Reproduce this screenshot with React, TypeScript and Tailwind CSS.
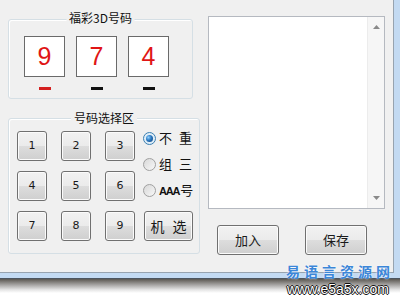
import React from 'react';

const btn =
  'border border-[#707070] rounded-[3px] bg-[linear-gradient(to_bottom,#f2f2f2_0%,#ebebeb_50%,#dddddd_50%,#cfcfcf_100%)] shadow-[inset_0_0_0_1px_#fbfbfb] flex items-center justify-center text-[#1a1a1a]';

const GroupBox: React.FC<{ title: string; className: string; titleTop: string; children: React.ReactNode }> = ({
  title,
  className,
  titleTop,
  children,
}) => (
  <div className={`relative border border-[#d5dfe5] rounded-[3px] shadow-[inset_1px_1px_0_#ffffff] ${className}`}>
    <div
      className={`absolute left-1/2 -translate-x-1/2 ${titleTop} bg-[#f0f0f0] px-[3px] text-[12px] leading-[16px] text-[#111] whitespace-nowrap`}
    >
      {title}
    </div>
    {children}
  </div>
);

const DigitBox: React.FC<{ value: string; dash: string }> = ({ value, dash }) => (
  <div className="flex flex-col items-center">
    <div className="w-[41px] h-[41px] border border-[#6a6a6a] bg-white flex items-center justify-center font-['Liberation_Sans',sans-serif] text-[25px] leading-none text-[#e01515]">
      {value}
    </div>
    <div className={`mt-[10px] w-[12px] h-[3px] ${dash}`} />
  </div>
);

const Radio: React.FC<{ checked?: boolean; children: React.ReactNode }> = ({ checked, children }) => (
  <div className="flex items-center h-[16px]">
    <div
      className={`w-[13px] h-[13px] rounded-full border flex items-center justify-center ${
        checked ? 'border-[#3c7fb1] bg-[#dfeef8]' : 'border-[#a0a0a0] bg-[linear-gradient(135deg,#d8d8d8,#f8f8f8)]'
      }`}
    >
      {checked && (
        <div className="w-[7px] h-[7px] rounded-full bg-[radial-gradient(circle_at_35%_35%,#8fd0ff_0%,#2b78c0_45%,#0e3f78_100%)]" />
      )}
    </div>
    <div className="ml-[3px] text-[13px] leading-[16px] text-[#111] whitespace-pre [word-spacing:4px]">{children}</div>
  </div>
);

const App: React.FC = () => {
  const nums = ['1', '2', '3', '4', '5', '6', '7', '8', '9'];

  return (
    <div className="w-[400px] h-[300px] bg-white overflow-hidden relative font-['Noto_Sans_CJK_SC',sans-serif]">
      {/* window with frame */}
      <div className="w-[400px] h-[279px] bg-[#c3daf2] border-b border-[#4b5560]">
        <div className="w-[394px] h-[273px] bg-[#f0f0f0] border-r border-b border-[#97a3af] flex pl-[8px]">
          {/* left column */}
          <div className="w-[192px] flex flex-col">
            <GroupBox title="福彩3D号码" className="mt-[19px] w-[185px] h-[80px]" titleTop="-top-[10px]">
              <div className="flex gap-[11px] pl-[15px] pt-[16px]">
                <DigitBox value="9" dash="bg-[#d42020]" />
                <DigitBox value="7" dash="bg-[#111]" />
                <DigitBox value="4" dash="bg-[#111]" />
              </div>
            </GroupBox>

            <GroupBox title="号码选择区" className="mt-[19px] w-[192px] h-[136px]" titleTop="-top-[9px]">
              <div className="flex pl-[8px] pt-[12px]">
                <div className="grid grid-cols-[30px_30px_30px] gap-x-[14px] gap-y-[10px]">
                  {nums.map((n) => (
                    <div key={n} className={`${btn} h-[30px] text-[11px] font-['DejaVu_Sans',sans-serif]`}>
                      {n}
                    </div>
                  ))}
                </div>
                <div className="ml-[8px] -mt-[1px] flex flex-col gap-[10px]">
                  <Radio checked>{'不 重'}</Radio>
                  <Radio>{'组 三'}</Radio>
                  <Radio>
                    <span className="font-['Liberation_Sans',sans-serif] font-bold text-[11px] tracking-[-1.2px]">AAA</span>
                    <span className="ml-[1px]">号</span>
                  </Radio>
                  <div
                    className={`${btn} ml-[1px] mt-[3px] w-[49px] h-[30px] text-[14px] whitespace-pre [word-spacing:5px]`}
                  >
                    {'机 选'}
                  </div>
                </div>
              </div>
            </GroupBox>
          </div>

          {/* right column */}
          <div className="ml-[8px] pt-[16px] flex flex-col">
            <div className="w-[177px] h-[193px] border border-[#b5b9c0] bg-white flex justify-end">
              <div className="w-[17px] h-full bg-[#f6f6f6] border-l border-[#ececec] flex flex-col justify-between items-center py-[8px]">
                <svg width="7" height="4" viewBox="0 0 7 4">
                  <path d="M0 4 L3.5 0 L7 4 Z" fill="#8a8a8a" />
                </svg>
                <svg width="7" height="4" viewBox="0 0 7 4">
                  <path d="M0 0 L3.5 4 L7 0 Z" fill="#8a8a8a" />
                </svg>
              </div>
            </div>
            <div className="mt-[16px] pl-[9px] flex gap-[26px]">
              <div className={`${btn} w-[62px] h-[30px] text-[13px]`}>加入</div>
              <div className={`${btn} w-[62px] h-[30px] text-[13px]`}>保存</div>
            </div>
          </div>
        </div>
      </div>
      {/* drop shadow under window */}
      <div className="w-[400px] h-[14px] bg-[linear-gradient(to_bottom,#5a5650,#9a9896_35%,#e2e2e2_75%,#ffffff)]" />

      {/* watermark */}
      <div className="absolute left-[286px] top-[262px] text-[14px] leading-[18px] tracking-[4px] text-[#3b86d8] font-bold [text-shadow:0_0_2px_#ffffff]">
        易语言资源网
      </div>
      <div className="absolute left-[287px] top-[281px] font-['Liberation_Sans',sans-serif] text-[14px] leading-[16px] text-white [text-shadow:1px_0_0_#111,-1px_0_0_#111,0_1px_0_#111,0_-1px_0_#111]">
        www.e5a5x.com
      </div>
    </div>
  );
};

export default App;
